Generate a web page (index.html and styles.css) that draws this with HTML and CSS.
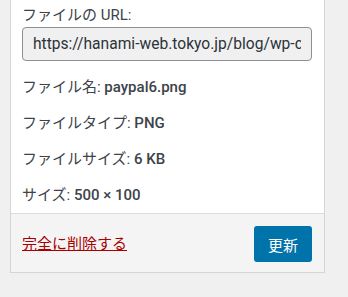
FILE: index.html
```html
<!DOCTYPE html>
<html lang="ja">
<head>
<meta charset="utf-8">
<link rel="stylesheet" href="styles.css">
</head>
<body>
<div class="wrap">
  <div class="card">
    <div class="card-body">
      <label class="url-label" for="url">ファイルの URL:</label>
      <input id="url" class="url-input" type="text" readonly value="https://hanami-web.tokyo.jp/blog/wp-content/uploads/2020/05/paypal6.png">
      <p class="meta">ファイル名: <span class="val">paypal6.png</span></p>
      <p class="meta">ファイルタイプ: <span class="val">PNG</span></p>
      <p class="meta">ファイルサイズ: <span class="val">6 KB</span></p>
      <p class="meta">サイズ: <span class="val">500 × 100</span></p>
    </div>
    <div class="card-foot">
      <a class="delete" href="#">完全に削除する</a>
      <button class="btn-primary" type="button">更新</button>
    </div>
  </div>
</div>
</body>
</html>
```

FILE: styles.css
```css
html, body {
  margin: 0;
  padding: 0;
  background: #f0f0f1;
}
body {
  font-family: Roboto, "Noto Sans CJK JP", sans-serif;
  font-size: 15px;
  color: #3c434a;
}
.wrap {
  padding-left: 10px;
  width: 315px;
}
.card {
  background: #fff;
  border: 1px solid #d3d5d8;
  border-top: 0;
}
.card-body {
  padding: 5px 12px 8px 11px;
}
.url-label {
  display: block;
  line-height: 20px;
  height: 22px;
}
.url-input {
  display: block;
  box-sizing: border-box;
  width: 100%;
  height: 34px;
  margin: 0;
  padding: 0 10px;
  font-family: Roboto, sans-serif;
  font-size: 15.6px;
  color: #2c3338;
  background: #f0f0f1;
  border: 1px solid #8c8f94;
  border-radius: 4px;
  outline: none;
}
.meta {
  margin: 16px 0 0;
  line-height: 20px;
}
.val {
  font-weight: 500;
}
.card-foot {
  display: flex;
  justify-content: space-between;
  align-items: center;
  padding: 12px 12px 10px 11px;
  background: #f4f4f4;
  border-top: 1px solid #dcdcde;
}
.delete {
  color: #a00;
  text-decoration: underline;
  font-size: 15px;
  line-height: 20px;
}
.btn-primary {
  box-sizing: border-box;
  width: 58px;
  height: 36px;
  padding: 0;
  background: #0073aa;
  color: #fff;
  border: 0;
  border-radius: 3px;
  font-family: "Noto Sans CJK JP", sans-serif;
  font-size: 15px;
}
```
